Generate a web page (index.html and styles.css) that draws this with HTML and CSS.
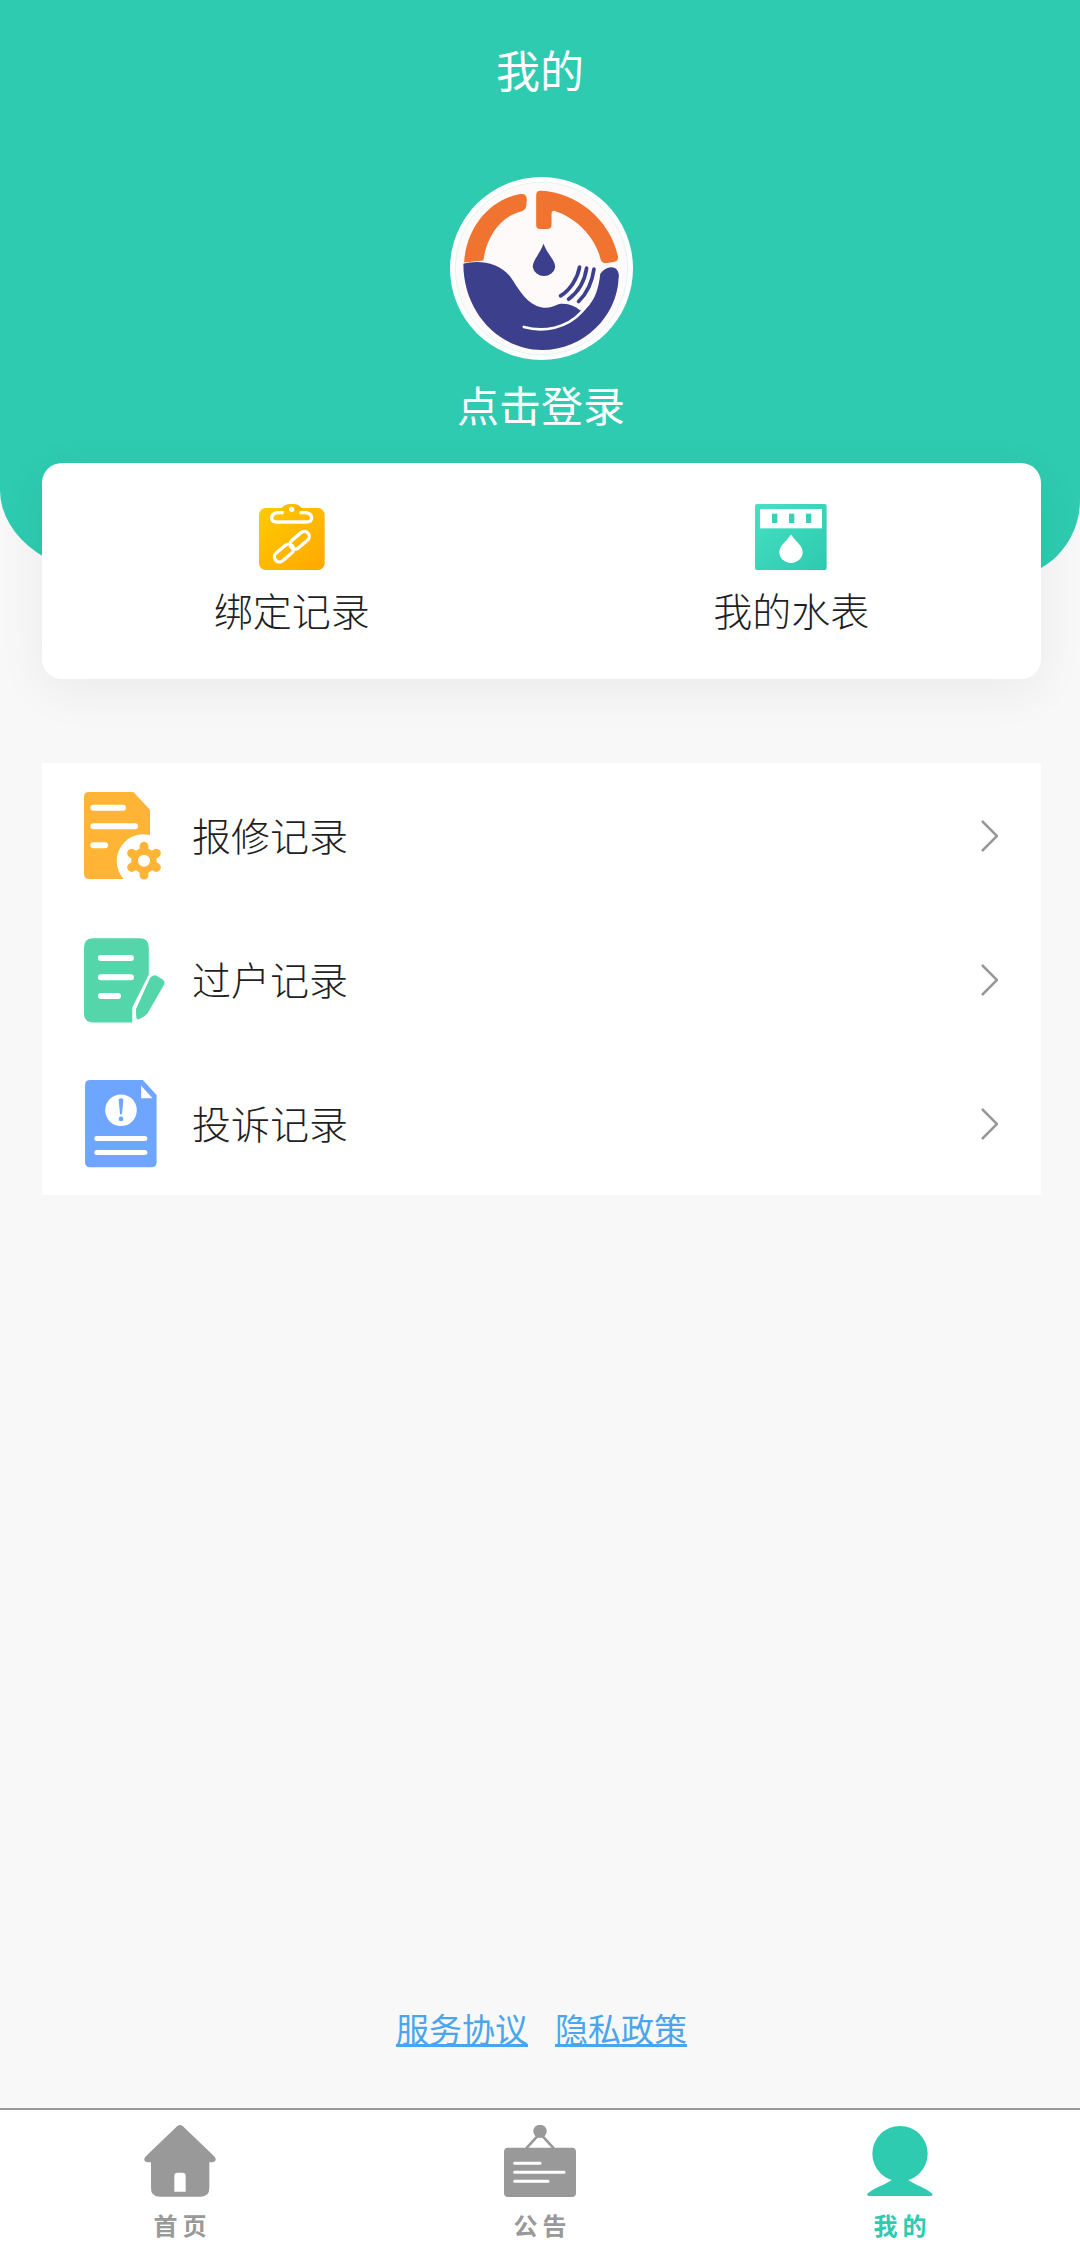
FILE: index.html
```html
<!DOCTYPE html>
<html lang="zh-CN">
<head>
    <meta charset="UTF-8">
    <meta name="viewport" content="width=device-width, initial-scale=1.0">
    <title>我的</title>
    <link rel="stylesheet" href="styles.css">
</head>
<body>

<div class="page">

    <!-- 顶部 -->
    <div class="header">
        <h1 class="title">我的</h1>
        <svg class="avatar" viewBox="90 82 548 548">
            <circle cx="364" cy="356" r="274" fill="#fff"/>
            <circle cx="364" cy="356" r="258" fill="#fdfaf9" stroke="#bfeee4" stroke-width="1.5"/>
            <path fill="#f07330" d="M132,338 C140,230 210,150 300,133 Q320,130 320,150 L318,170 Q316,182 300,186 C245,200 200,255 190,332 Z"/>
            <path fill="#f07330" d="M348,137 Q348,122 362,123 C470,128 570,210 593,320 Q595,336 575,337 L555,340 Q543,338 540,325 C525,265 470,205 404,184 Q394,180 394,195 L394,225 Q394,238 380,238 L360,238 Q348,238 348,225 Z"/>
            <path fill="#3b3f8c" d="M130,342 C170,330 235,335 270,380 C295,415 310,450 350,468 C375,478 395,472 415,463 C440,458 465,468 480,482 C520,470 535,420 540,372 Q560,345 585,355 Q598,365 595,385 C590,500 490,600 365,600 C240,600 130,490 130,342 Z"/>
            <path fill="none" stroke="#fff" stroke-width="8" stroke-linecap="round" d="M311,531 C370,548 440,535 484,486 L505,462"/>
            <path fill="none" stroke="#3b3f8c" stroke-width="11" stroke-linecap="round" d="M478,352 C472,385 450,420 421,438 M499,355 C494,390 475,425 445,448 M521,358 C516,395 500,430 475,455"/>
            <path fill="#3b3f8c" d="M370,282 C382,315 405,330 405,352 A34,32 0 0 1 338,352 C338,330 358,315 370,282 Z"/>
        </svg>
        <p class="login">点击登录</p>
    </div>

    <!-- 绑定记录 / 我的水表 -->
    <div class="card">
        <div class="cardItem">
            <svg class="cardIcon" viewBox="58 42 197 198">
                <defs>
                    <linearGradient id="goldGrad" x1="0" y1="0" x2="1" y2="1">
                        <stop offset="0" stop-color="#ffca00"/>
                        <stop offset="1" stop-color="#ffa800"/>
                    </linearGradient>
                </defs>
                <rect x="58" y="54" width="197" height="186" rx="20" fill="url(#goldGrad)"/>
                <path fill="url(#goldGrad)" d="M125,60 A30,18 0 0 1 187,60 Z"/>
                <path fill="none" stroke="#fff" stroke-width="10" stroke-linejoin="round" d="M132,68 H112 Q96,72 96,84 Q96,96 112,96 H200 Q216,96 216,84 Q216,72 200,68 H180"/>
                <circle cx="156" cy="58" r="8" fill="#fff"/>
                <g fill="none" stroke="#fff" stroke-width="10">
                    <rect x="-33" y="-15" width="66" height="30" rx="15" transform="translate(133 189) rotate(-40)"/>
                    <rect x="-33" y="-15" width="66" height="30" rx="15" transform="translate(180 151) rotate(-40)"/>
                </g>
            </svg>
            <span class="cardText">绑定记录</span>
        </div>
        <div class="cardItem">
            <svg class="cardIcon" viewBox="45 42 215 198">
                <defs>
                    <linearGradient id="tealGrad" x1="0" y1="0" x2="1" y2="1">
                        <stop offset="0" stop-color="#48e0c4"/>
                        <stop offset="1" stop-color="#2ccaae"/>
                    </linearGradient>
                </defs>
                <rect x="45" y="42" width="215" height="198" rx="6" fill="url(#tealGrad)"/>
                <rect x="60" y="57" width="186" height="58" fill="#fff"/>
                <rect x="96" y="71" width="16" height="28" fill="#35d3b6"/>
                <rect x="147" y="71" width="16" height="28" fill="#35d3b6"/>
                <rect x="198" y="71" width="16" height="28" fill="#35d3b6"/>
                <path fill="#fff" d="M153,133 C165,155 188,165 188,187 A35,32 0 0 1 118,187 C118,165 141,155 153,133 Z"/>
            </svg>
            <span class="cardText">我的水表</span>
        </div>
    </div>

    <!-- 记录列表 -->
    <div class="list">
        <div class="row">
            <div class="rowIcon">
                <svg class="iconRepair" viewBox="72 65 234 264">
                    <path fill="#ffb435" d="M87,65 H220 L270,118 V250 L200,326 H87 Q72,326 72,311 V80 Q72,65 87,65 Z"/>
                    <g stroke="#fff" stroke-width="18" stroke-linecap="round">
                        <path d="M100,112 H189 M100,168 H225 M100,225 H135"/>
                    </g>
                    <circle cx="250" cy="272" r="80" fill="#fff"/>
                    <g stroke="#ffb435" stroke-width="27" stroke-linecap="round">
                        <path d="M252,228 V314 M215,249 L289,291 M215,291 L289,249"/>
                    </g>
                    <circle cx="252" cy="271" r="38" fill="#ffb435"/>
                    <circle cx="252" cy="271" r="18" fill="#fff"/>
                </svg>
            </div>
            <span class="rowText">报修记录</span>
            <svg class="arrow" viewBox="0 0 17 32"><path d="M1,1 L16,16 L1,31"/></svg>
        </div>
        <div class="row">
            <div class="rowIcon">
                <svg class="iconTransfer" viewBox="72 500 245 256">
                    <path fill="#54d6aa" d="M100,500 H240 Q268,500 268,528 V610 L218,710 V755 H100 Q72,755 72,727 V528 Q72,500 100,500 Z"/>
                    <g stroke="#fff" stroke-width="18" stroke-linecap="round">
                        <path d="M123,560 H214 M123,618 H214 M123,675 H175"/>
                    </g>
                    <path fill="#54d6aa" d="M272,620 Q282,608 294,615 L310,625 Q320,632 312,645 L264,728 Q258,736 238,745 Q230,748 230,738 L229,715 Z"/>
                </svg>
            </div>
            <span class="rowText">过户记录</span>
            <svg class="arrow" viewBox="0 0 17 32"><path d="M1,1 L16,16 L1,31"/></svg>
        </div>
        <div class="row">
            <div class="rowIcon">
                <svg class="iconComplain" viewBox="75 930 214 262">
                    <path fill="#6ea6ff" d="M90,930 H247 L288,975 V1175 Q288,1190 273,1190 H90 Q75,1190 75,1175 V945 Q75,930 90,930 Z"/>
                    <path fill="#fff" d="M242,947 L276,984 H242 Z"/>
                    <circle cx="182" cy="1020" r="47" fill="#fff"/>
                    <path fill="#6ea6ff" d="M175,988 Q182,980 189,988 L185,1032 H179 Z"/>
                    <circle cx="182" cy="1046" r="7" fill="#6ea6ff"/>
                    <g stroke="#fff" stroke-width="15" stroke-linecap="round">
                        <path d="M110,1104 H253 M110,1146 H253"/>
                    </g>
                </svg>
            </div>
            <span class="rowText">投诉记录</span>
            <svg class="arrow" viewBox="0 0 17 32"><path d="M1,1 L16,16 L1,31"/></svg>
        </div>
    </div>

    <div class="links">
        <a href="#">服务协议</a>
        <a href="#">隐私政策</a>
    </div>

    <!-- 底部导航 -->
    <div class="tabbar">
        <div class="tab">
            <svg class="tabIcon" viewBox="72 75 216 216">
                <path fill="#999" d="M172,78 Q180,72 188,78 L284,170 Q293,184 277,187 H268 V265 Q268,290 243,290 H118 Q93,290 93,265 V187 H83 Q67,184 76,170 Z"/>
                <path fill="#fff" d="M163,275 V228 Q163,218 173,218 H187 Q197,218 197,228 V275 Z"/>
            </svg>
            <span class="tabText">首页</span>
        </div>
        <div class="tab">
            <svg class="tabIcon" viewBox="72 75 216 216">
                <circle cx="180" cy="94" r="20" fill="#999"/>
                <path fill="none" stroke="#999" stroke-width="8" d="M180,100 L138,146 M180,100 L222,146"/>
                <rect x="72" y="143" width="216" height="148" rx="12" fill="#999"/>
                <g stroke="#fff" stroke-width="9" stroke-linecap="round">
                    <path d="M104,190 H180 M104,217 H252 M104,244 H204"/>
                </g>
            </svg>
            <span class="tabText">公告</span>
        </div>
        <div class="tab tabActive">
            <svg class="tabIcon" viewBox="72 75 216 216">
                <circle cx="180" cy="161" r="83" fill="#2ecbb0"/>
                <path fill="#2ecbb0" d="M82,281 C100,265 140,252 155,240 H205 C220,252 260,265 277,281 Q279,288 270,288 H90 Q80,288 82,281 Z"/>
            </svg>
            <span class="tabText">我的</span>
        </div>
    </div>

</div>

</body>
</html>
```

FILE: styles.css
```css
* {
    box-sizing: border-box;
}

body {
    margin: 0;
    background-color: #f8f8f8;
    font-family: "Noto Sans CJK SC", "Noto Sans", sans-serif;
    color: #333;
}

.page {
    display: flex;
    flex-direction: column;
    height: 2247px;
    overflow: hidden;
}

/* header */
.header {
    display: flex;
    flex-direction: column;
    align-items: center;
    height: 578px;
    padding-top: 44px;
    background-color: #2ecbb0;
    border-radius: 0 0 76px 125px / 0 0 78px 88px;
}

.title {
    margin: 0;
    font-size: 44px;
    font-weight: 400;
    line-height: 50px;
    color: #fff;
}

.avatar {
    width: 183px;
    height: 183px;
    margin-top: 83px;
    margin-left: 2px;
}

.login {
    margin: 19px 0 0 2px;
    font-size: 42px;
    line-height: 50px;
    color: #fff;
}

/* card */
.card {
    display: grid;
    grid-template-columns: 1fr 1fr;
    width: 999px;
    margin: -115px 0 0 42px;
    padding: 41px 0 45px;
    background-color: #fff;
    border-radius: 20px;
    box-shadow: 0 12px 50px rgba(0, 0, 0, .06);
    position: relative;
}

.cardItem {
    display: flex;
    flex-direction: column;
    align-items: center;
}

.cardIcon {
    height: 66px;
}

.cardText {
    margin-top: 14px;
    font-size: 39px;
    font-weight: 300;
    line-height: 50px;
    color: #1f1f1f;
}

/* list */
.list {
    width: 999px;
    margin: 84px 0 0 42px;
    background-color: #fff;
}

.row {
    display: flex;
    align-items: center;
    height: 144px;
    padding: 0 43px 0 42px;
}

.rowIcon {
    width: 108px;
    padding-top: 2px;
}

.rowIcon svg {
    display: block;
}

.iconRepair {
    width: 78px;
    height: 88px;
}

.iconTransfer {
    width: 81px;
    height: 85px;
}

.iconComplain {
    width: 72px;
    height: 88px;
    margin-left: 1px;
}

.rowText {
    flex: 1;
    margin-bottom: 3px;
    font-size: 39px;
    font-weight: 300;
    line-height: 50px;
    color: #1f1f1f;
}

.arrow {
    width: 17px;
    height: 32px;
    margin-top: 2px;
}

.arrow path {
    fill: none;
    stroke: #999;
    stroke-width: 2.6;
}

/* links */
.links {
    display: flex;
    justify-content: center;
    gap: 27px;
    margin: auto 0 55px 3px;
    font-size: 33px;
    line-height: 50px;
}

.links a {
    color: #4aa5ee;
}

/* tabbar */
.tabbar {
    display: grid;
    grid-template-columns: 1fr 1fr 1fr;
    height: 139px;
    padding-top: 15px;
    background-color: #fff;
    border-top: 2px solid #999;
}

.tab {
    display: flex;
    flex-direction: column;
    align-items: center;
    color: #999;
}

.tabIcon {
    width: 72px;
    height: 72px;
}

.tabText {
    margin-top: 13px;
    margin-right: -5px;
    font-size: 24px;
    font-weight: 700;
    line-height: 30px;
    letter-spacing: 5px;
}

.tabActive {
    color: #2ecbb0;
}
```
